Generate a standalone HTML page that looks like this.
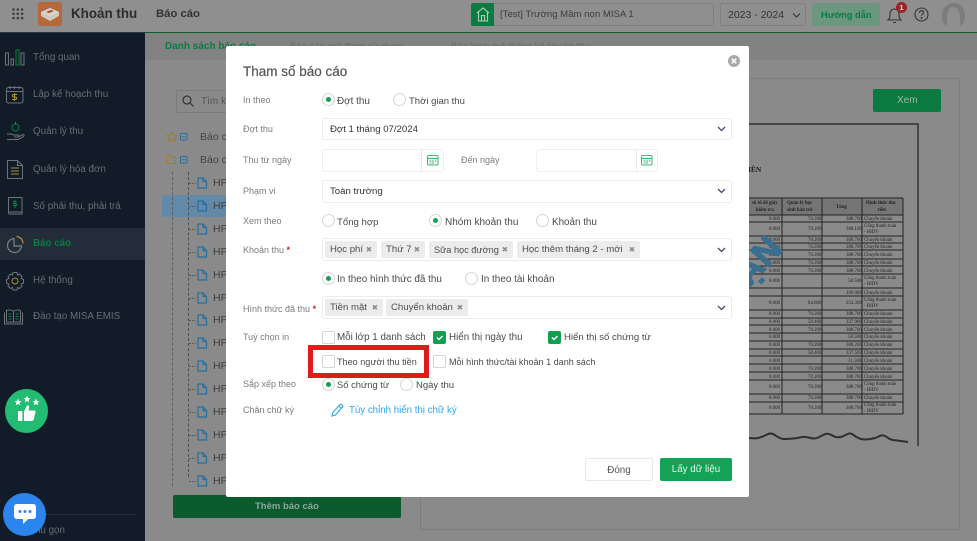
<!DOCTYPE html>
<html lang="vi"><head><meta charset="utf-8"><title>Tham số báo cáo</title>
<style>
html,body{margin:0;padding:0}
body{width:977px;height:541px;overflow:hidden;position:relative;background:#8a8a8a;font-family:"Liberation Sans","DejaVu Sans",sans-serif}
.a{position:absolute;box-sizing:border-box}
.t{position:absolute;white-space:nowrap;line-height:16px;font-size:9.7px;color:#4a4a4a}
.nav{color:#686d74;font-size:9.8px;left:33px}
.hp{left:213px;color:#3d3d3d;font-size:10.5px}
.lb{left:243px;color:#7c7c7c;font-size:9px}
.box{position:absolute;box-sizing:border-box;background:#fff;border:1px solid #ececec;border-radius:3px;left:322px;width:410px}
.tag{position:absolute;height:17px;background:#ececec;border-radius:2px;line-height:18px;font-size:9.6px;color:#4d4d4d;padding-left:5px;box-sizing:border-box;white-space:nowrap}
.tag b{position:absolute;right:5px;top:0;color:#8c8c8c;font-size:7.5px;font-weight:bold}
.r{position:absolute;width:13px;height:13px;border:1px solid #d5d5d5;border-radius:50%;box-sizing:border-box;background:#fff}
.r.on:after{content:"";position:absolute;left:3px;top:3px;width:5px;height:5px;border-radius:50%;background:#12a04f}
.c{position:absolute;width:13px;height:13px;border:1px solid #d5d5d5;border-radius:2px;box-sizing:border-box;background:#fff}
.c.on{background:#12a04f;border-color:#12a04f}
.c svg{position:absolute;left:1px;top:1px}
svg{position:absolute;overflow:visible}
.tb text{font-family:"Liberation Serif",serif;font-size:4.9px;fill:#222}
</style></head><body>

<!-- top bar -->
<div class="a" style="left:0;top:0;width:977px;height:32px;background:#8f8f8f"></div>
<div class="a" style="left:145px;top:32px;width:832px;height:1px;background:#0d5e33"></div>
<div class="a" style="left:0;top:32px;width:145px;height:1px;background:#2b3644"></div>
<svg style="left:12px;top:8px" width="12" height="12" fill="#3f3f3f"><circle cx="1.5" cy="1.5" r="1.3"/><circle cx="5.8" cy="1.5" r="1.3"/><circle cx="10.1" cy="1.5" r="1.3"/><circle cx="1.5" cy="5.8" r="1.3"/><circle cx="5.8" cy="5.8" r="1.3"/><circle cx="10.1" cy="5.8" r="1.3"/><circle cx="1.5" cy="10.1" r="1.3"/><circle cx="5.8" cy="10.1" r="1.3"/><circle cx="10.1" cy="10.1" r="1.3"/></svg>
<div class="a" style="left:38px;top:2px;width:24px;height:24px;background:#b5683a;border-radius:3px"></div>
<svg style="left:40px;top:7px" width="20" height="15"><path d="M10 1 19 5 19 9 10 14 1 9 1 5Z" fill="#cfcabf"/><path d="M10 1 19 5 10 9 1 5Z" fill="#d9d4ca"/><path d="M6 5l5-2 3 1-5 2z" fill="#a8442c"/></svg>
<div class="t" style="left:71px;top:5px;font-size:13.4px;font-weight:bold;color:#2c2c2c;line-height:18px">Khoản thu</div>
<div class="t" style="left:156px;top:6px;font-size:11.3px;font-weight:bold;color:#333">Báo cáo</div>

<div class="a" style="left:471px;top:3px;width:243px;height:23px;border:1px solid #7f7f7f;border-radius:3px;background:#8f8f8f"></div>
<div class="a" style="left:471px;top:3px;width:23px;height:23px;background:#0a7c41;border-radius:2px 0 0 2px"></div>
<svg style="left:476px;top:7px" width="14" height="15" fill="none" stroke="#b9cdbf" stroke-width="1.1"><path d="M1 6 7 1l6 5M2.500 5v9h9V5M5.500 14V8.500h3V14"/></svg>
<div class="t" style="left:500px;top:7px;font-size:9.6px;color:#3c3c3c">[Test] Trường Mầm non MISA 1</div>
<div class="a" style="left:720px;top:3px;width:86px;height:23px;border:1px solid #7f7f7f;border-radius:3px"></div>
<div class="t" style="left:728px;top:7px;font-size:10.5px;color:#333">2023 - 2024</div>
<svg style="left:792px;top:13px" width="9" height="5" fill="none" stroke="#333" stroke-width="1.1"><path d="M1 .5 4.500 4 8 .5"/></svg>
<div class="a" style="left:812px;top:3px;width:68px;height:23px;background:#6b967f;border-radius:3px"></div>
<div class="t" style="left:821px;top:7px;font-size:9.3px;font-weight:bold;color:#0c7a42">Hướng dẫn</div>
<svg style="left:887px;top:6px" width="15" height="18" fill="none" stroke="#333" stroke-width="1.1"><path d="M1 14c2-2 2-3 2-6 0-3 2-5 4.500-5S12 5 12 8c0 3 0 4 2 6ZM6 16.500h3"/></svg>
<div class="a" style="left:896px;top:2px;width:11px;height:11px;border-radius:50%;background:#9a2427;color:#ddd;font-size:7.500px;line-height:11px;text-align:center;font-weight:bold">1</div>
<svg style="left:914px;top:7px" width="15" height="15" fill="none" stroke="#333" stroke-width="1.1"><circle cx="7.500" cy="7.500" r="6.500"/><path d="M5.500 6c0-3 4-3 4 -.3 0 1.500-2 1.500-2 3"/><circle cx="7.500" cy="11" r=".4"/></svg>
<div class="a" style="left:942px;top:3px;width:23px;height:24px;background:#7c7c7c;border-radius:50% 50% 40% 40%"></div>
<div class="a" style="left:947px;top:7px;width:13px;height:20px;background:#8f8f8f;border-radius:50% 50% 0 0"></div>

<!-- sidebar -->
<div class="a" style="left:0;top:33px;width:145px;height:508px;background:#121c29"></div>
<div class="a" style="left:0;top:228px;width:145px;height:32px;background:#232c39"></div>
<svg style="left:5px;top:49px" width="20" height="18" fill="none" stroke="#6e7379"><rect x=".5" y="4" width="3" height="12"/><rect x="6" y="10" width="2.500" height="6"/><rect x="11" y="1" width="3" height="15" stroke="#0c7e45"/><rect x="16" y="4" width="3" height="12"/></svg>
<svg style="left:6px;top:85px" width="18" height="19" fill="none" stroke="#6e7379"><rect x=".5" y="2.500" width="16.500" height="15.500" rx="2"/><path d="M.5 6.500h16.500M4 1v3M8.500 1v3M13 1v3"/><path d="M8.500 8v8M11 9.500H7.500c-1.500 0-1.500 2.500 0 2.500h2c1.500 0 1.500 2.500 0 2.500H6" stroke="#a8912b"/></svg>
<svg style="left:6px;top:122px" width="19" height="20" fill="none" stroke="#6e7379"><circle cx="9.500" cy="5.500" r="3.500" stroke="#0c7e45"/><path d="M9.500 0v2M1 12h4l3 1h4c1 0 1 2 0 2H8m5-.5 4-2c1.500 0 1.500 1.500 0 2.500l-5 2.500H1"/></svg>
<svg style="left:7px;top:160px" width="16" height="19" fill="none" stroke="#6e7379"><path d="M.5.500h10l5 5v13H.5ZM10.500.500v5h5"/><path d="M4 8h8M4 11h8M4 14h8" stroke="#a8912b"/></svg>
<svg style="left:8px;top:197px" width="15" height="19" fill="none" stroke="#6e7379"><path d="M.5 15V.500h13.500V17H2c-2 0-2-2 0-2h12"/><path d="M7 3v8M9 4.500H6c-1 0-1 2 0 2h2c1 0 1 2 0 2H5" stroke="#0c7e45"/></svg>
<svg style="left:7px;top:236px" width="17" height="17" fill="none" stroke="#7d8288" stroke-width="1.200"><path d="M7 2.500a7 7 0 1 0 7.500 7.500H7Z"/><path d="M9.500.500a7 7 0 0 1 6.500 7" stroke="#a8912b"/></svg>
<svg style="left:6px;top:272px" width="18" height="18" fill="none" stroke="#6e7379"><path d="M7 .500h4l.5 2.500 2-1 2.500 2.500-1 2 2.500 1v3.500l-2.500 1 1 2-2.500 2.500-2-1-.5 2.500H7l-.5-2.500-2 1L2 14l1-2-2.500-1V7.500l2.500-1-1-2L4.500 2l2 1Z"/><circle cx="9" cy="9" r="3" stroke="#a8912b"/></svg>
<svg style="left:4px;top:309px" width="20" height="16" fill="none" stroke="#6e7379"><path d="M2.500 1.500c3-1 6-.5 7 1 1-1.500 4-2 7-1V13h-14ZM.5 3.500v11.500h18V3.500M9.500 2.500V13"/><path d="M4.500 5h3M4.500 7.500h3M4.500 10h3M11.500 5h3M11.500 7.500h3M11.500 10h3" stroke="#0c7e45"/></svg>
<div class="t nav" style="top:50px">Tổng quan</div>
<div class="t nav" style="top:87px">Lập kế hoạch thu</div>
<div class="t nav" style="top:124px">Quản lý thu</div>
<div class="t nav" style="top:162px">Quản lý hóa đơn</div>
<div class="t nav" style="top:199px">Số phải thu, phải trả</div>
<div class="t nav" style="top:236px;color:#0c7a42;font-weight:bold">Báo cáo</div>
<div class="t nav" style="top:273px">Hệ thống</div>
<div class="t nav" style="top:309px">Đào tạo MISA EMIS</div>
<div class="a" style="left:40px;top:514px;width:96px;height:1px;background:#252e3b"></div>
<div class="t nav" style="top:523px;left:29px">Thu gọn</div>

<div class="a" style="left:5px;top:389px;width:43px;height:44px;border-radius:50%;background:#22bd72"></div>
<svg style="left:12px;top:396px" width="30" height="30" fill="#fff"><path d="M5 5l1-2.500L7 5l2.500.2-2 1.600.7 2.500L6 8l-2.200 1.300.7-2.500-2-1.600ZM14 2l1-2.500L16 2l2.500.2-2 1.600.7 2.500L15 5l-2.200 1.300.7-2.500-2-1.600ZM23 5l1-2.500L25 5l2.500.2-2 1.600.7 2.500L24 8l-2.200 1.300.7-2.500-2-1.600Z"/><rect x="6" y="15" width="4.500" height="10" rx="1"/><path d="M12 15.500l3-6c2-.5 2.500 1 2 2.500l-.6 2.500H22c2 0 2 2 1 3l-1 5c-.3 1.500-1 2.500-2.500 2.500H12Z"/></svg>
<div class="a" style="left:3px;top:493px;width:43px;height:43px;border-radius:50%;background:#2c85ed"></div>
<svg style="left:14px;top:504px" width="22" height="21"><path d="M3 0h16c1.500 0 3 1 3 3v9c0 2-1.500 3-3 3h-5l-5 5v-5H3c-1.500 0-3-1-3-3V3C0 1 1.500 0 3 0Z" fill="#fff"/><circle cx="6" cy="7.500" r="1.500" fill="#2c85ed"/><circle cx="11" cy="7.500" r="1.500" fill="#2c85ed"/><circle cx="16" cy="7.500" r="1.500" fill="#2c85ed"/></svg>

<!-- main -->
<div class="a" style="left:145px;top:33px;width:832px;height:27px;background:#828282"></div>
<div class="t" style="left:165px;top:39px;font-size:10px;font-weight:bold;color:#0c7a42">Danh sách báo cáo</div>
<div class="t" style="left:290px;top:39px;font-size:9.6px;color:#6a6a6a">Báo cáo mô đang sử dụng</div>
<div class="t" style="left:451px;top:39px;font-size:9.6px;color:#6a6a6a">Báo hình mô thống kê khoản thu</div>
<div class="a" style="left:176px;top:90px;width:60px;height:23px;border:1px solid #7c7c7c;border-radius:2px"></div>
<svg style="left:182px;top:95px" width="12" height="12" fill="none" stroke="#333" stroke-width="1.200"><circle cx="5" cy="5" r="4"/><path d="M8 8l3.500 3.500"/></svg>
<div class="t" style="left:201px;top:94px;color:#555;font-size:10px">Tìm kiếm</div>
<svg style="left:166px;top:131px" width="12" height="11" fill="none" stroke="#9a7f3c" stroke-width="1.200"><path d="M6 .8 7.500 4.200l3.700.3-2.800 2.400.9 3.500L6 8.500 2.700 10.400l.9-3.500L.8 4.500l3.700-.3Z"/></svg>
<svg style="left:180px;top:133px" width="8" height="8" fill="none" stroke="#2a6d9b"><rect x=".5" y=".5" width="6.500" height="6.500" rx="1"/><path d="M2 3.750h3.500"/></svg>
<svg style="left:166px;top:155px" width="10" height="9" fill="none" stroke="#9a7f3c"><path d="M.5.500h3.500l1 1.500h4.500v6.500H.5Z"/></svg>
<svg style="left:180px;top:156px" width="8" height="8" fill="none" stroke="#2a6d9b"><rect x=".5" y=".5" width="6.500" height="6.500" rx="1"/><path d="M2 3.750h3.500"/></svg>
<div class="t" style="left:200px;top:129px;color:#444;font-size:10.5px">Báo cáo</div>
<div class="t" style="left:200px;top:152px;color:#444;font-size:10.5px">Báo cáo</div>
<div class="a" style="left:162px;top:195px;width:70px;height:22px;background:#6389a8"></div>
<div class="a" style="left:172px;top:172px;width:0;height:314px;border-left:1px dashed #5f5f5f"></div>
<div class="a" style="left:188px;top:172px;width:0;height:305px;border-left:1px dashed #4f4f4f"></div>
<svg style="left:188px;top:176px" width="22" height="312" fill="none">
<g stroke="#5a5a5a" stroke-dasharray="2 1"><path d="M1 7.500h7M1 30.500h7M1 53.500h7M1 76.500h7M1 99.500h7M1 122.500h7M1 144.500h7M1 167.500h7M1 190.500h7M1 213.500h7M1 236.500h7M1 259.500h7M1 282.500h7M1 305.500h7"/></g>
<g stroke="#25709f" stroke-width="1.200"><path d="M10 2h5l3.500 3.500V12H10ZM15 2v3.500h3.500"/><path transform="translate(0 23)" d="M10 2h5l3.500 3.500V12H10ZM15 2v3.500h3.500"/><path transform="translate(0 46)" d="M10 2h5l3.500 3.500V12H10ZM15 2v3.500h3.500"/><path transform="translate(0 69)" d="M10 2h5l3.500 3.500V12H10ZM15 2v3.500h3.500"/><path transform="translate(0 92)" d="M10 2h5l3.500 3.500V12H10ZM15 2v3.500h3.500"/><path transform="translate(0 115)" d="M10 2h5l3.500 3.500V12H10ZM15 2v3.500h3.500"/><path transform="translate(0 137)" d="M10 2h5l3.500 3.500V12H10ZM15 2v3.500h3.500"/><path transform="translate(0 160)" d="M10 2h5l3.500 3.500V12H10ZM15 2v3.500h3.500"/><path transform="translate(0 183)" d="M10 2h5l3.500 3.500V12H10ZM15 2v3.500h3.500"/><path transform="translate(0 206)" d="M10 2h5l3.500 3.500V12H10ZM15 2v3.500h3.500"/><path transform="translate(0 229)" d="M10 2h5l3.500 3.500V12H10ZM15 2v3.500h3.500"/><path transform="translate(0 252)" d="M10 2h5l3.500 3.500V12H10ZM15 2v3.500h3.500"/><path transform="translate(0 275)" d="M10 2h5l3.500 3.500V12H10ZM15 2v3.500h3.500"/><path transform="translate(0 298)" d="M10 2h5l3.500 3.500V12H10ZM15 2v3.500h3.500"/></g></svg>
<div class="t hp" style="top:175px">HP</div><div class="t hp" style="top:198px">HP</div><div class="t hp" style="top:221px">HP</div><div class="t hp" style="top:244px">HP</div><div class="t hp" style="top:267px">HP</div><div class="t hp" style="top:290px">HP</div><div class="t hp" style="top:312px">HP</div><div class="t hp" style="top:335px">HP</div><div class="t hp" style="top:358px">HP</div><div class="t hp" style="top:381px">HP</div><div class="t hp" style="top:404px">HP</div><div class="t hp" style="top:427px">HP</div><div class="t hp" style="top:450px">HP</div><div class="t hp" style="top:473px">HP</div>
<div class="a" style="left:173px;top:495px;width:228px;height:23px;background:#0b5b2f;border-radius:2px"></div>
<div class="t" style="left:255px;top:499px;font-size:9.5px;font-weight:bold;color:#8fa598">Thêm báo cáo</div>

<div class="a" style="left:420px;top:78px;width:540px;height:452px;border:1px solid #7b7b7b"></div>
<div class="a" style="left:873px;top:89px;width:68px;height:23px;background:#0b7a41;border-radius:2px"></div>
<div class="t" style="left:897px;top:93px;font-size:10px;color:#9cb7a7">Xem</div>

<!-- paper -->
<svg class="tb" style="left:0;top:0" width="977" height="541">
<path d="M430 124H918V446" fill="none" stroke="#333" stroke-width="1.500"/>
<path d="M430 440l320-2c6 1 10 0 16-3 8-5 10 4 18 4s14-1 18-2c6-1 10 3 15 1 5-2 8-5 12-4 5 2 6 4 12 3 6-2 8-5 11-3s5 4 9 5 10 0 14-1 6-4 10-2 3 3 8 4l8 1 7 1" fill="none" stroke="#2e2e2e" stroke-width="2"/>
<text x="748" y="172" style="font-size:7.500px;font-weight:bold;fill:#1d1d1d">IÊN</text>
<rect x="748" y="198" width="155" height="17" fill="#757575"/>
<g stroke="#222" stroke-width="1" fill="none">
<path d="M748 198H903M748 215H903M748 222H903M748 236H903M748 243H903M748 250H903M748 259H903M748 266H903M748 274H903M748 288H903M748 296H903M748 310H903M748 318H903M748 325H903M748 333H903M748 341H903M748 349H903M748 356H903M748 364H903M748 372H903M748 380H903M748 394H903M748 402H903M748 414H903"/>
<path d="M782 198V414M822 198V414M862 198V414M903 198V414"/></g>
<text x="752" y="204" style="font-weight:bold">sổ tổ để giấy</text><text x="756" y="211" style="font-weight:bold">kiểm tra</text>
<text x="787" y="204" style="font-weight:bold">Quản lý học</text><text x="787" y="211" style="font-weight:bold">sinh bán trú</text>
<text x="836" y="208" style="font-weight:bold">Tổng</text>
<text x="866" y="204" style="font-weight:bold">Hình thức thu</text><text x="878" y="211" style="font-weight:bold">tiền</text>
<g>
<text x="769" y="220">8.000</text><text x="808" y="220">70.200</text><text x="846" y="220">388.700</text><text x="864" y="220">Chuyển khoản</text>
<text x="769" y="230">8.000</text><text x="808" y="230">70.200</text><text x="846" y="230">388.100</text><text x="864" y="227">Cổng thanh toán</text><text x="864" y="233">- BIDV</text>
<text x="769" y="241">8.000</text><text x="808" y="241">70.200</text><text x="846" y="241">388.700</text><text x="864" y="241">Chuyển khoản</text>
<text x="769" y="248">8.000</text><text x="808" y="248">70.200</text><text x="846" y="248">388.700</text><text x="864" y="248">Chuyển khoản</text>
<text x="769" y="256">8.000</text><text x="808" y="256">70.200</text><text x="846" y="256">388.700</text><text x="864" y="256">Chuyển khoản</text>
<text x="769" y="264">8.000</text><text x="808" y="264">70.200</text><text x="846" y="264">388.700</text><text x="864" y="264">Chuyển khoản</text>
<text x="769" y="272">8.000</text><text x="808" y="272">70.200</text><text x="846" y="272">388.700</text><text x="864" y="272">Chuyển khoản</text>
<text x="769" y="282">8.000</text><text x="848" y="282">58.500</text><text x="864" y="279">Cổng thanh toán</text><text x="864" y="285">- BIDV</text>
<text x="846" y="294">109.000</text><text x="864" y="294">Chuyển khoản</text>
<text x="769" y="304">8.000</text><text x="808" y="304">84.800</text><text x="846" y="304">254.300</text><text x="864" y="301">Cổng thanh toán</text><text x="864" y="307">- BIDV</text>
<text x="769" y="315">8.000</text><text x="808" y="315">70.200</text><text x="846" y="315">388.700</text><text x="864" y="315">Chuyển khoản</text>
<text x="769" y="323">8.000</text><text x="808" y="323">59.400</text><text x="846" y="323">337.900</text><text x="864" y="323">Chuyển khoản</text>
<text x="769" y="331">8.000</text><text x="808" y="331">70.200</text><text x="846" y="331">388.700</text><text x="864" y="331">Chuyển khoản</text>
<text x="769" y="338">8.000</text><text x="848" y="338">58.500</text><text x="864" y="338">Chuyển khoản</text>
<text x="769" y="346">8.000</text><text x="808" y="346">70.200</text><text x="846" y="346">388.200</text><text x="864" y="346">Chuyển khoản</text>
<text x="769" y="354">8.000</text><text x="808" y="354">50.400</text><text x="846" y="354">337.500</text><text x="864" y="354">Chuyển khoản</text>
<text x="769" y="362">6.000</text><text x="848" y="362">31.500</text><text x="864" y="362">Chuyển khoản</text>
<text x="769" y="370">8.000</text><text x="808" y="370">70.200</text><text x="846" y="370">388.700</text><text x="864" y="370">Chuyển khoản</text>
<text x="769" y="378">8.000</text><text x="808" y="378">70.200</text><text x="846" y="378">388.700</text><text x="864" y="378">Chuyển khoản</text>
<text x="769" y="388">8.000</text><text x="808" y="388">70.200</text><text x="846" y="388">388.700</text><text x="864" y="385">Cổng thanh toán</text><text x="864" y="391">- BIDV</text>
<text x="769" y="399">8.000</text><text x="808" y="399">70.200</text><text x="846" y="399">388.700</text><text x="864" y="399">Chuyển khoản</text>
<text x="769" y="409">8.000</text><text x="808" y="409">70.200</text><text x="846" y="409">388.700</text><text x="864" y="406">Cổng thanh toán</text><text x="864" y="412">- BIDV</text>
</g>
<text transform="translate(733 306) rotate(-48)" style="font-family:'Liberation Sans',sans-serif;font-size:35px;font-weight:bold;fill:#3a6e8e;stroke:#3a6e8e;stroke-width:1.200px">HẠN</text>
</svg>

<!-- modal -->
<div class="a" style="left:226px;top:46px;width:523px;height:451px;background:#fff;border-radius:2px"></div>
<div class="t" style="left:243px;top:63px;font-size:13.5px;line-height:18px;color:#555;-webkit-text-stroke:.2px #555">Tham số báo cáo</div>
<svg style="left:728px;top:55px" width="12" height="12"><circle cx="6" cy="6" r="6" fill="#aaa"/><path d="M3.700 3.700l4.600 4.600M8.300 3.700 3.700 8.300" stroke="#fff" stroke-width="1.500"/></svg>

<div class="t lb" style="top:92px">In theo</div>
<div class="r on" style="left:322px;top:93px"></div><div class="t" style="left:337px;top:94px;font-size:9.9px">Đợt thu</div>
<div class="r" style="left:393px;top:93px"></div><div class="t" style="left:409px;top:94px;font-size:9.5px">Thời gian thu</div>

<div class="t lb" style="top:121px">Đợt thu</div>
<div class="box" style="top:118px;height:22px"></div>
<div class="t" style="left:330px;top:122px;color:#333;font-size:9.6px">Đợt 1 tháng 07/2024</div>
<svg style="left:717px;top:126px" width="9" height="6" fill="none" stroke="#4b4968" stroke-width="1.300"><path d="M1 1l3.500 3.500L8 1"/></svg>

<div class="t lb" style="top:152px">Thu từ ngày</div>
<div class="box" style="top:149px;height:23px;width:122px;border-color:#efefef"></div>
<div class="a" style="left:421px;top:149px;width:1px;height:23px;background:#e9e9e9"></div>
<svg style="left:427px;top:155px" width="12" height="11" fill="none" stroke="#3fb777"><rect x=".5" y=".5" width="10.500" height="9.500" rx="1"/><path d="M.5 3.500h10.500" stroke-width="1.300"/><path d="M2.500 6h2M5 6h2M8 6h1.500M2.500 8h2M5 8h2" stroke-width=".9"/></svg>
<div class="t lb" style="left:461px;top:152px">Đến ngày</div>
<div class="box" style="left:536px;top:149px;height:23px;width:122px;border-color:#efefef"></div>
<div class="a" style="left:636px;top:149px;width:1px;height:23px;background:#e9e9e9"></div>
<svg style="left:641px;top:155px" width="12" height="11" fill="none" stroke="#3fb777"><rect x=".5" y=".5" width="10.500" height="9.500" rx="1"/><path d="M.5 3.500h10.500" stroke-width="1.300"/><path d="M2.500 6h2M5 6h2M8 6h1.500M2.500 8h2M5 8h2" stroke-width=".9"/></svg>

<div class="t lb" style="top:183px">Phạm vi</div>
<div class="box" style="top:180px;height:23px"></div>
<div class="t" style="left:330px;top:184px;color:#333;font-size:9.6px">Toàn trường</div>
<svg style="left:717px;top:188px" width="9" height="6" fill="none" stroke="#4b4968" stroke-width="1.300"><path d="M1 1l3.500 3.500L8 1"/></svg>

<div class="t lb" style="top:213px">Xem theo</div>
<div class="r" style="left:322px;top:214px"></div><div class="t" style="left:337px;top:215px;font-size:9.6px">Tổng hợp</div>
<div class="r on" style="left:429px;top:214px"></div><div class="t" style="left:445px;top:215px;font-size:10px">Nhóm khoản thu</div>
<div class="r" style="left:536px;top:214px"></div><div class="t" style="left:552px;top:215px;font-size:9.85px">Khoản thu</div>

<div class="t lb" style="top:242px">Khoản thu <span style="color:#e02020;font-weight:bold">*</span></div>
<div class="box" style="top:238px;height:23px"></div>
<div class="tag" style="left:325px;top:241px;width:52px">Học phí<b>✖</b></div>
<div class="tag" style="left:381px;top:241px;width:44px">Thứ 7<b>✖</b></div>
<div class="tag" style="left:429px;top:241px;width:84px;font-size:9.2px">Sữa học đường<b>✖</b></div>
<div class="tag" style="left:517px;top:241px;width:123px">Học thêm tháng 2 - mới<b>✖</b></div>
<svg style="left:717px;top:247px" width="9" height="6" fill="none" stroke="#4b4968" stroke-width="1.300"><path d="M1 1l3.500 3.500L8 1"/></svg>

<div class="r on" style="left:322px;top:272px"></div><div class="t" style="left:337px;top:272px;font-size:9.9px">In theo hình thức đã thu</div>
<div class="r" style="left:465px;top:272px"></div><div class="t" style="left:481px;top:272px;font-size:9.95px">In theo tài khoản</div>

<div class="t lb" style="top:301px">Hình thức đã thu <span style="color:#e02020;font-weight:bold">*</span></div>
<div class="box" style="top:296px;height:23px"></div>
<div class="tag" style="left:325px;top:299px;width:58px">Tiền mặt<b>✖</b></div>
<div class="tag" style="left:386px;top:299px;width:82px">Chuyển khoản<b>✖</b></div>
<svg style="left:717px;top:305px" width="9" height="6" fill="none" stroke="#4b4968" stroke-width="1.300"><path d="M1 1l3.500 3.500L8 1"/></svg>

<div class="t lb" style="top:329px">Tuỳ chọn in</div>
<div class="c" style="left:322px;top:331px"></div><div class="t" style="left:337px;top:330px;font-size:9.8px">Mỗi lớp 1 danh sách</div>
<div class="c on" style="left:433px;top:331px"><svg width="9" height="9" fill="none" stroke="#fff" stroke-width="1.400"><path d="M2 4.500l2 2 3.500-3.500"/></svg></div><div class="t" style="left:449px;top:330px;font-size:9.8px">Hiển thị ngày thu</div>
<div class="c on" style="left:548px;top:331px"><svg width="9" height="9" fill="none" stroke="#fff" stroke-width="1.400"><path d="M2 4.500l2 2 3.500-3.500"/></svg></div><div class="t" style="left:564px;top:330px;font-size:9.6px">Hiển thị số chứng từ</div>

<div class="a" style="left:308px;top:345px;width:121px;height:33px;border:5px solid #e01b1b"></div>
<div class="c" style="left:322px;top:355px"></div><div class="t" style="left:337px;top:354px;font-size:9.1px">Theo người thu tiền</div>
<div class="c" style="left:433px;top:355px"></div><div class="t" style="left:449px;top:354px;font-size:9.05px">Mỗi hình thức/tài khoản 1 danh sách</div>

<div class="t lb" style="top:376px">Sắp xếp theo</div>
<div class="r on" style="left:322px;top:378px"></div><div class="t" style="left:337px;top:377px;font-size:9.4px">Số chứng từ</div>
<div class="r" style="left:400px;top:378px"></div><div class="t" style="left:416px;top:378px;font-size:9.5px">Ngày thu</div>

<div class="t lb" style="top:402px">Chân chữ ký</div>
<svg style="left:331px;top:403px" width="13" height="14" fill="none" stroke="#2ba6ee" stroke-width="1.100"><path d="M1 13l.8-3.500L9 1.500c1-1 3.500 1 2.500 2.500L4.500 12Z M8 3l2.500 2.500"/></svg>
<div class="t" style="left:349px;top:403px;color:#2ba6ee">Tùy chỉnh hiển thị chữ ký</div>

<div class="a" style="left:585px;top:458px;width:68px;height:23px;border:1px solid #e8e8e8;border-radius:2px;background:#fff;text-align:center;font-size:9.8px;line-height:23px;color:#555">Đóng</div>
<div class="a" style="left:660px;top:458px;width:72px;height:23px;background:#12a356;border-radius:2px;text-align:center;font-size:9.8px;line-height:24px;color:#e6f5ec">Lấy dữ liệu</div>
</body></html>
